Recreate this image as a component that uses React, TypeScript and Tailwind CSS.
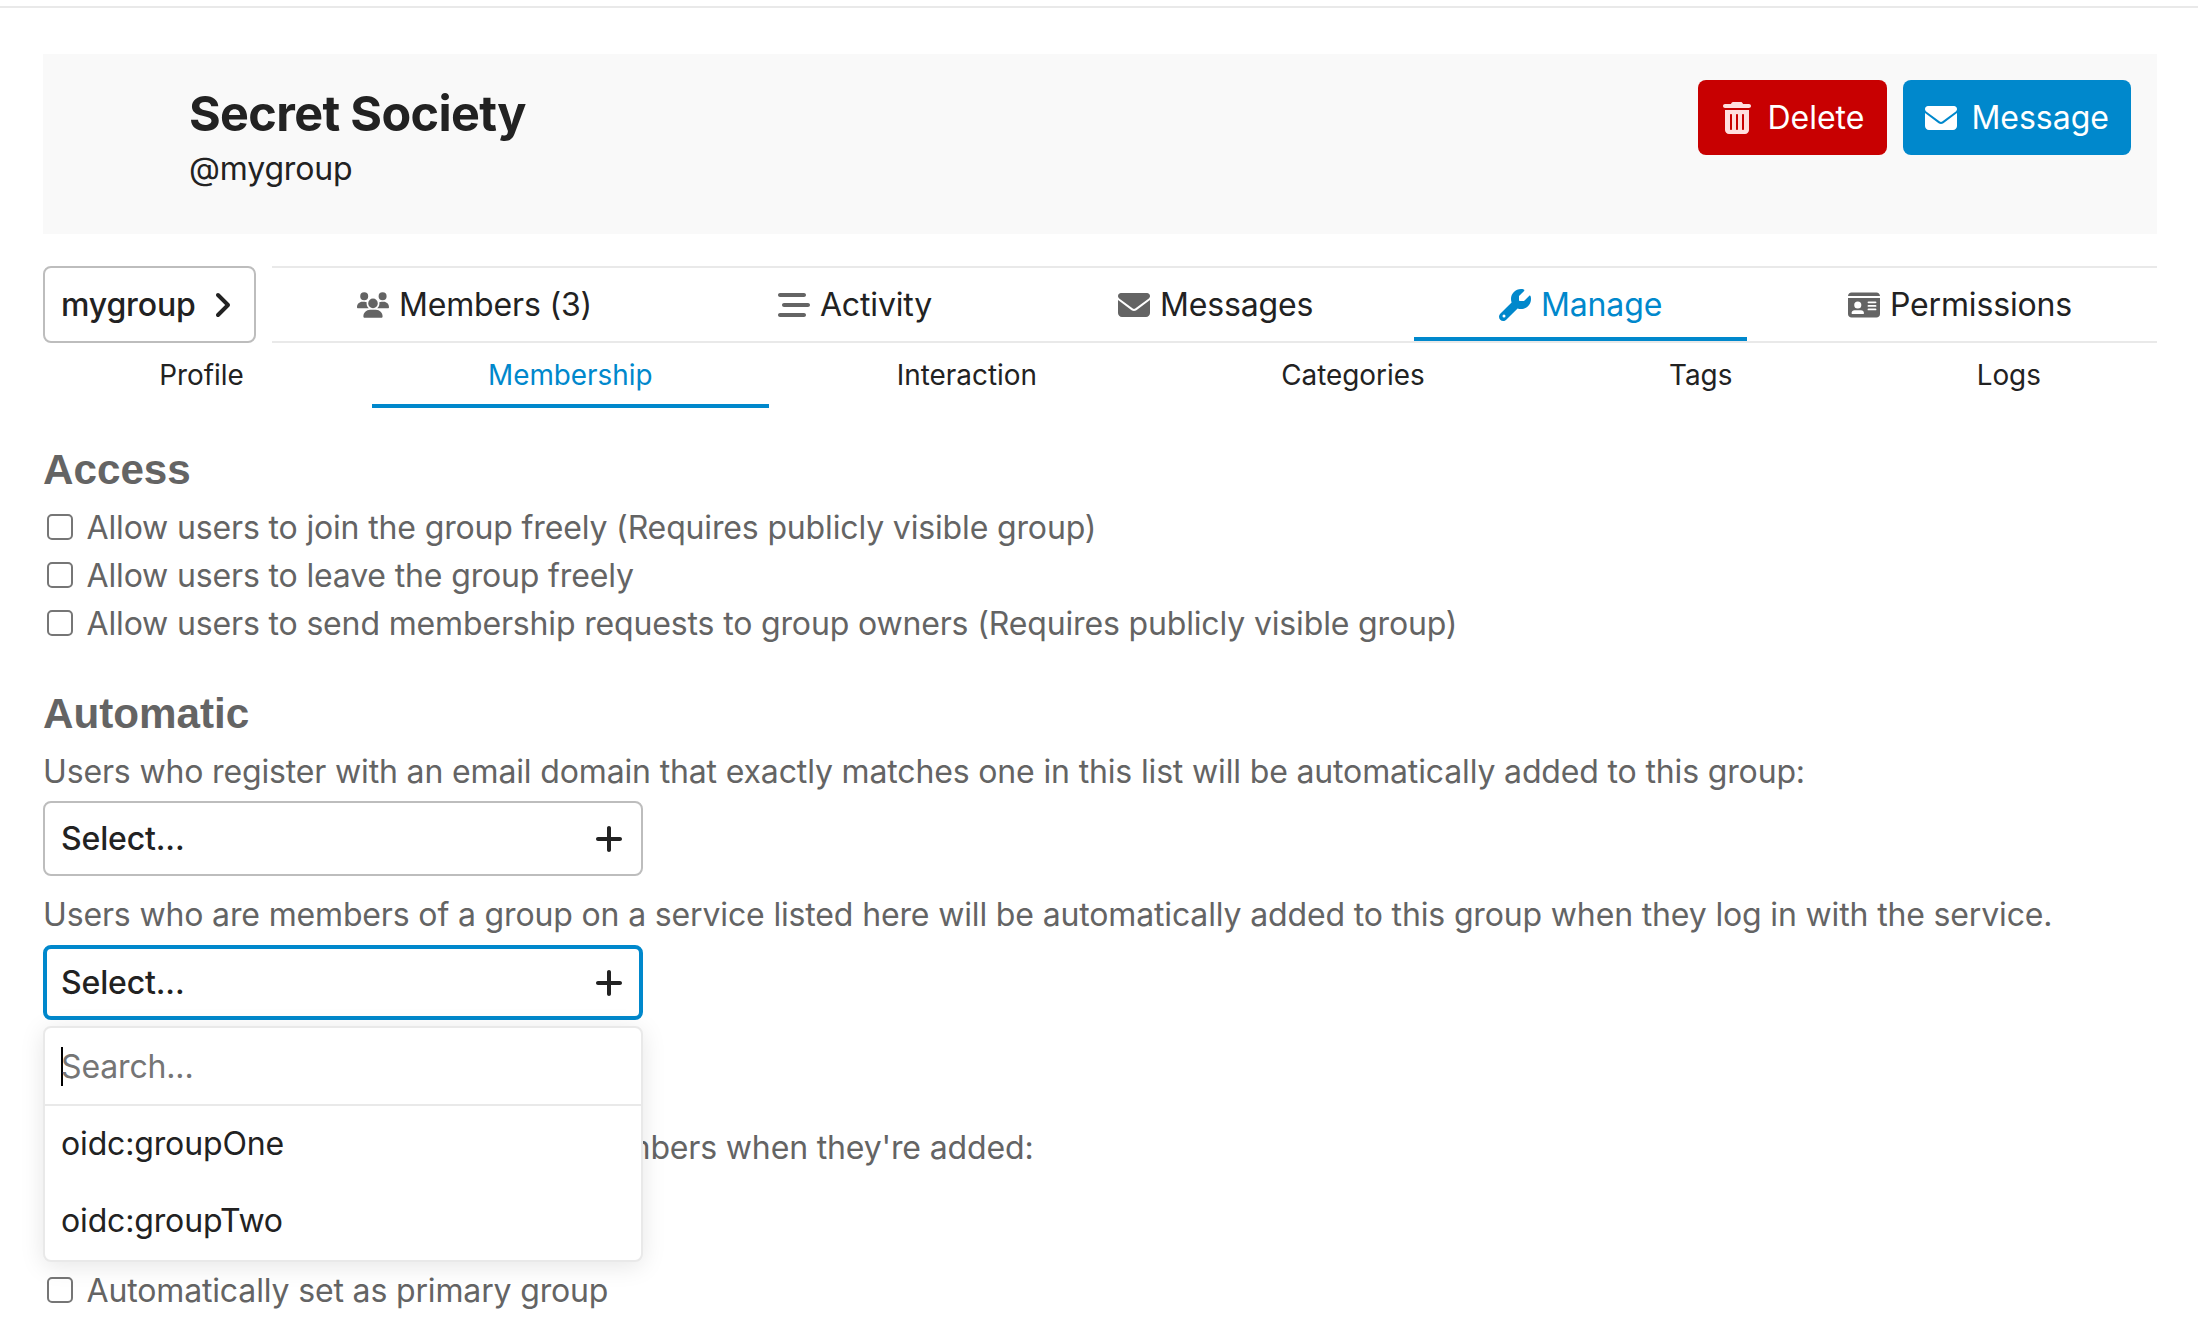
import type { ReactNode } from "react";
import type { IconType } from "react-icons";
import {
    FaAngleRight,
    FaBarsStaggered,
    FaEnvelope,
    FaIdCard,
    FaPlus,
    FaTrashCan,
    FaUsers,
    FaWrench,
} from "react-icons/fa6";

type Tab = { label: string; icon: IconType; active?: boolean };

const tabs: Tab[] = [
    { label: "Members (3)", icon: FaUsers },
    { label: "Activity", icon: FaBarsStaggered },
    { label: "Messages", icon: FaEnvelope },
    { label: "Manage", icon: FaWrench, active: true },
    { label: "Permissions", icon: FaIdCard },
];

const subTabs = ["Profile", "Membership", "Interaction", "Categories", "Tags", "Logs"];

const accessOptions = [
    "Allow users to join the group freely (Requires publicly visible group)",
    "Allow users to leave the group freely",
    "Allow users to send membership requests to group owners (Requires publicly visible group)",
];

const serviceGroups = ["oidc:groupOne", "oidc:groupTwo"];

const CheckRow = ({ children }: { children: ReactNode }) => (
    <label className="flex h-12 items-center gap-[13.5px] pl-1">
        <input
            type="checkbox"
            className="size-[26px] shrink-0 appearance-none rounded-[5px] border-2 border-[#767676] bg-white"
        />
        <span className="pt-0.5">{children}</span>
    </label>
);

const SelectBox = ({ open }: { open?: boolean }) => (
    <button
        className={
            open
                ? "flex h-[75px] w-[600px] items-center justify-between rounded-lg border-4 border-[#0088cc] pr-[14px] pl-[14px] font-medium text-[#222222]"
                : "flex h-[75px] w-[600px] items-center justify-between rounded-lg border-2 border-[#bdbdbd] pr-4 pl-4 font-medium text-[#222222]"
        }
    >
        <span>Select...</span>
        <FaPlus />
    </button>
);

const Header = () => (
    <header className="flex h-[180px] justify-between bg-[#f9f9f9] pr-[26px] pl-[146px] text-[#222222]">
        <div className="pt-[31px]">
            <h1 className="text-[48.5px] leading-[58px] font-bold tracking-[-0.65px]">Secret Society</h1>
            <div className="mt-0.5 leading-[48px]">@mygroup</div>
        </div>
        <div className="flex gap-4 pt-[26px] tracking-normal text-white">
            <button className="flex h-[75px] items-center gap-[14px] rounded-lg bg-[#c80001] px-[23px]">
                <FaTrashCan className="text-[#ffdfdf]" />
                Delete
            </button>
            <button className="flex h-[75px] items-center gap-[14px] rounded-lg bg-[#0088cc] px-[22px]">
                <FaEnvelope />
                Message
            </button>
        </div>
    </header>
);

const App = () => {
    return (
        <div className="h-[1340px] overflow-hidden bg-white pt-[6px] font-['Inter',sans-serif] text-[32px] leading-[48px] tracking-[-0.15px] text-[#646464]">
            <div className="h-0.5 bg-[#e9e9e9]" />
            <main className="mt-[46px] mr-[41px] ml-[43px]">
                <Header />

                <div className="mt-8 flex gap-4 text-[#222222]">
                    <button className="flex h-[77px] w-[213px] items-center justify-between rounded-lg border-2 border-[#bdbdbd] pr-4 pl-4 font-medium">
                        mygroup
                        <FaAngleRight />
                    </button>
                    <nav className="flex h-[77px] flex-1 gap-4 border-y-2 border-[#e9e9e9]">
                        {tabs.map(({ label, icon: Icon, active }) => (
                            <a
                                key={label}
                                className={
                                    active
                                        ? "flex flex-auto items-center justify-center gap-2.5 border-b-4 border-[#0088cc] pt-1 text-[#0088cc]"
                                        : "flex flex-auto items-center justify-center gap-2.5"
                                }
                            >
                                <Icon className={active ? "" : "text-[#646464]"} />
                                {label}
                            </a>
                        ))}
                    </nav>
                </div>

                <nav className="flex h-[65px] gap-3 text-[27.86px] tracking-normal text-[#222222]">
                    {subTabs.map((label) => (
                        <a
                            key={label}
                            className={
                                label === "Membership"
                                    ? "flex flex-auto justify-center border-b-4 border-[#0088cc] pt-2 text-[#0088cc]"
                                    : "flex flex-auto justify-center pt-2"
                            }
                        >
                            {label}
                        </a>
                    ))}
                </nav>

                <section className="mt-[37px]">
                    <h2 className="font-['Liberation_Sans',Arial,sans-serif] text-[42.2px] leading-[50px] font-bold tracking-normal">
                        Access
                    </h2>
                    <div className="mt-2">
                        {accessOptions.map((option) => (
                            <CheckRow key={option}>{option}</CheckRow>
                        ))}
                    </div>
                </section>

                <section className="mt-[42px]">
                    <h2 className="font-['Liberation_Sans',Arial,sans-serif] text-[42.2px] leading-[50px] font-bold tracking-normal">
                        Automatic
                    </h2>
                    <p className="mt-[9px] mb-[5px]">
                        Users who register with an email domain that exactly matches one in this list will be
                        automatically added to this group:
                    </p>
                    <SelectBox />
                    <p className="mt-[15px] mb-[6px]">
                        Users who are members of a group on a service listed here will be automatically added to
                        this group when they log in with the service.
                    </p>
                    <div className="relative w-[600px]">
                        <SelectBox open />
                        {/* open dropdown, covers the trust level setting below */}
                        <div className="absolute top-[81px] left-0 z-10 h-[236px] w-[600px] rounded-lg border-2 border-[#e9e9e9] bg-white text-[#222222] shadow-[0_4px_24px_rgba(0,0,0,0.1)]">
                            <div className="flex h-[78px] items-center border-b-2 border-[#e9e9e9] pl-4">
                                <span className="h-[39px] w-0.5 bg-black" />
                                <span className="-ml-0.5 pt-0.5 text-[#757575]">Search...</span>
                            </div>
                            {serviceGroups.map((group) => (
                                <div key={group} className="flex h-[77px] items-center pb-0.5 pl-4">
                                    {group}
                                </div>
                            ))}
                        </div>
                    </div>
                </section>

                <section className="mt-[104px]">
                    <p>Trust level automatically granted to members when they're added:</p>
                    <div className="mt-[94px]">
                        <CheckRow>Automatically set as primary group</CheckRow>
                    </div>
                </section>
            </main>
        </div>
    );
};

export default App;
